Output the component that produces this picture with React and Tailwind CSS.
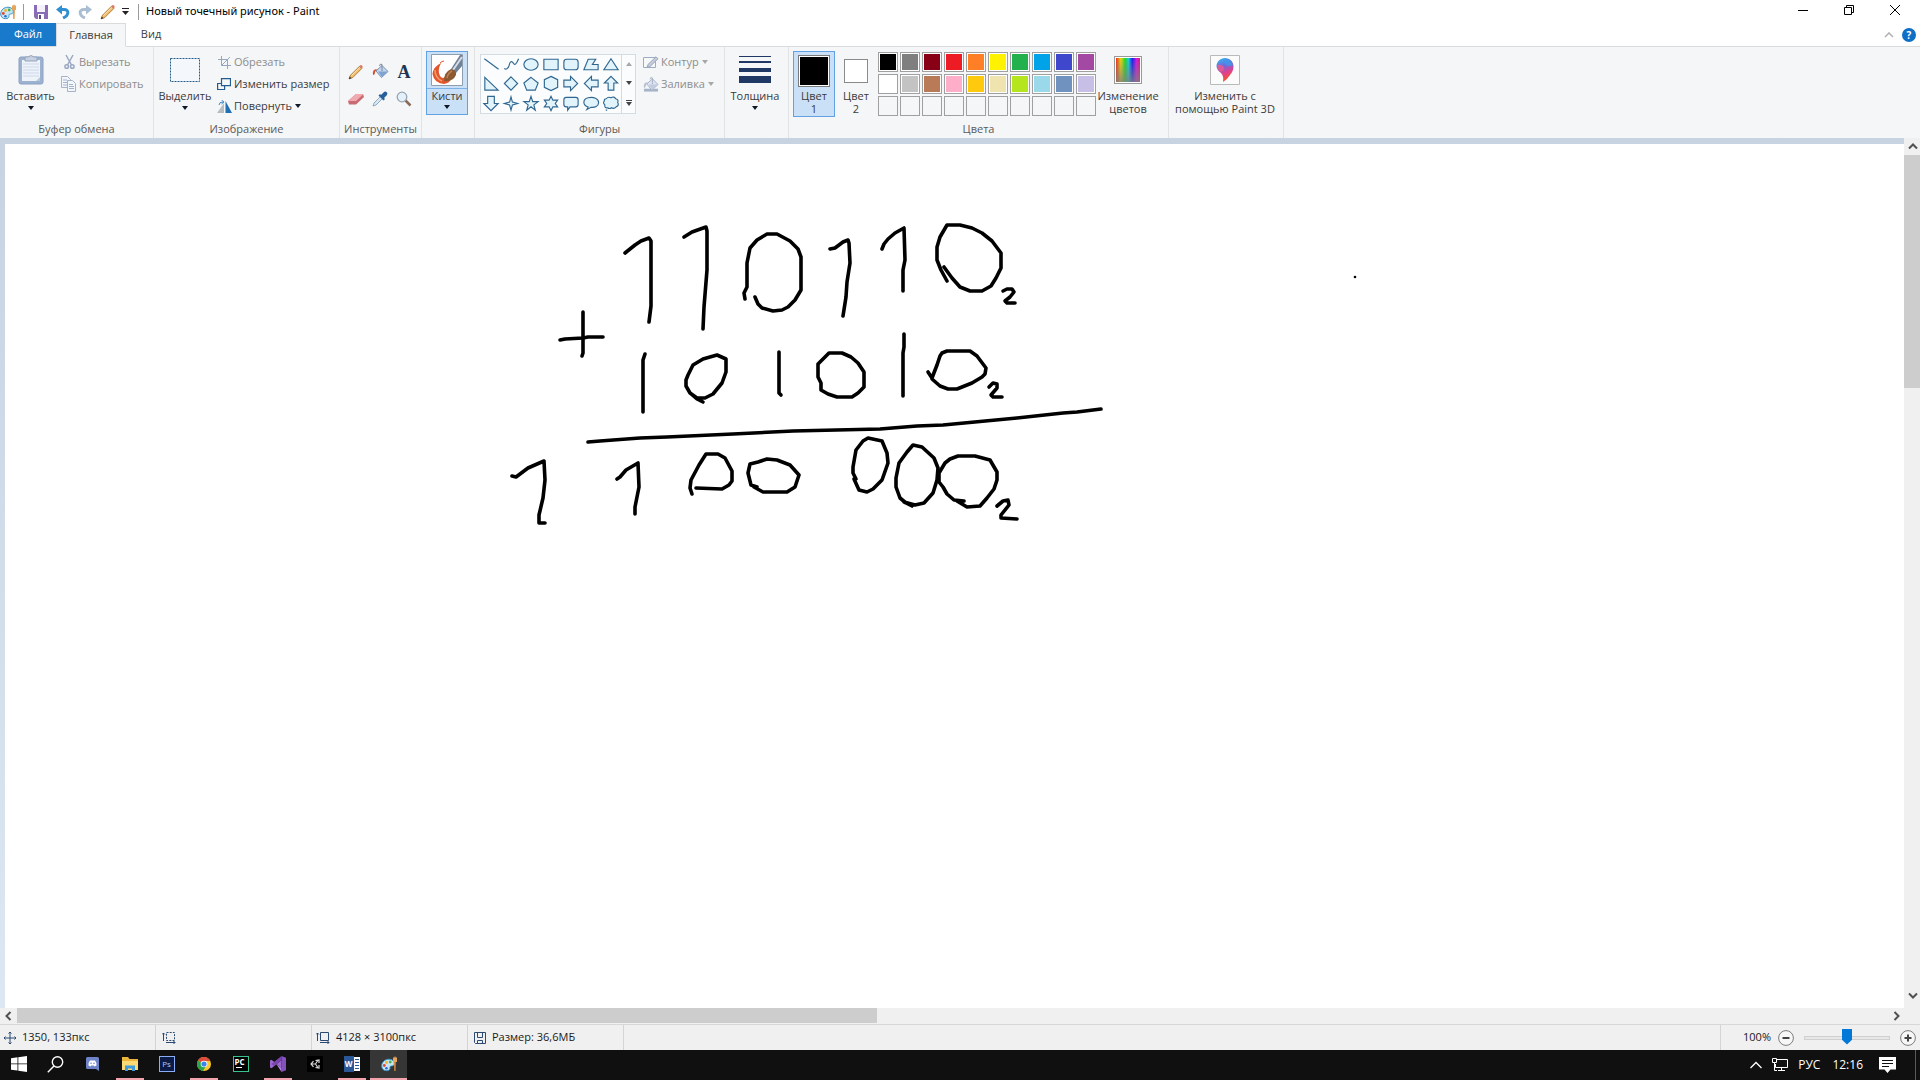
import React, { useState } from "react";

const paletteColors = [
  ["black", "bg-[#000000]"],
  ["gray", "bg-[#7f7f7f]"],
  ["dark red", "bg-[#880015]"],
  ["red", "bg-[#ed1c24]"],
  ["orange", "bg-[#ff7f27]"],
  ["yellow", "bg-[#fff200]"],
  ["green", "bg-[#22b14c]"],
  ["turquoise", "bg-[#00a2e8]"],
  ["indigo", "bg-[#3f48cc]"],
  ["purple", "bg-[#a349a4]"],
  ["white", "bg-[#ffffff]"],
  ["light gray", "bg-[#c3c3c3]"],
  ["brown", "bg-[#b97a57]"],
  ["rose", "bg-[#ffaec9]"],
  ["gold", "bg-[#ffc90e]"],
  ["light yellow", "bg-[#efe4b0]"],
  ["lime", "bg-[#b5e61d]"],
  ["light turquoise", "bg-[#99d9ea]"],
  ["blue gray", "bg-[#7092be]"],
  ["lavender", "bg-[#c8bfe7]"],
];

// Outlines of the shape gallery, each inside a 20x20 cell
const shapes = [
  ["Line", "M3 4L18 15"],
  ["Curve", "M3 14C5 16 7 14 8 11C9 7 10 6 12 8C14 12 16 9 18 4"],
  ["Oval", "M2.5 10a7.5 6 0 1 0 15 0a7.5 6 0 1 0-15 0z"],
  ["Rectangle", "M2.5 4.5h15v11h-15z"],
  ["Rounded rectangle", "M5.5 4.5h9q3 0 3 3v5q0 3-3 3h-9q-3 0-3-3v-5q0-3 3-3z"],
  ["Polygon", "M2.5 15.5L7 4.5h8L11.5 10H17.5v5.5z"],
  ["Triangle", "M10 4L17.5 15.5h-15z"],
  ["Right triangle", "M3.5 3.5L17.5 17h-14z"],
  ["Diamond", "M10 3L17 10L10 17L3 10z"],
  ["Pentagon", "M10 3.5L17.5 9.5L14.5 17h-9L2.5 9.5z"],
  ["Hexagon", "M10 2.5L17 6v8L10 17.5L3 14V6z"],
  ["Right arrow", "M2.5 6.5h7v-4L17 10L9.5 17.5v-4h-7z"],
  ["Left arrow", "M17.5 6.5h-7v-4L3 10l7.5 7.5v-4h7z"],
  ["Up arrow", "M10 2.5L17 9.5h-4v7.5h-6V9.5H3z"],
  ["Down arrow", "M6.5 2.5h7v7.5h4L10 17.5L2.5 10h4z"],
  ["Four-point star", "M10 3L11.5 8.5L17 10L11.5 11.5L10 17L8.5 11.5L3 10L8.5 8.5z"],
  ["Five-point star", "M10 2.5L11.8 8h5.7l-4.5 3.5L14.5 17L10 13.5L5.5 17L7 11.5L2.5 8h5.7z"],
  ["Six-point star", "M10 2.5L12 6.5h5L14.5 10L17 13.5h-5L10 17.5L8 13.5H3L5.5 10L3 6.5h5z"],
  ["Rounded callout", "M5 3.5h10q2.5 0 2.5 2.5v5q0 2.5-2.5 2.5H9L6.5 17v-3.5H5q-2.5 0-2.5-2.5V6q0-2.5 2.5-2.5z"],
  ["Oval callout", "M5.5 16.5L7 13.7C1 12 1 5.5 7 4C13 2.5 18 5 18 9C18 13 14 14.5 10 14z"],
  ["Cloud callout", "M5 5Q7 2.5 10 4Q13 2 15 5Q18.5 6 17 9Q19 12 15.5 13.5Q13 16 10.5 14.5Q8.5 16 6.5 14.5Q3 15 3.5 11.5Q1 9 3 7.5Q2.5 5 5 5zM4.5 17h1.5"],
];

// Brush strokes in window coordinates
const strokes = [
  "625 253 635 245 641 241 649 238 651 241 651 306 649 322",
  "684 237 692 232 706 227 707 231 707 270 704 307 703 329",
  "745 299 744 293 747 287 747 263 750 248 757 240 767 234 777 234 790 241 798 249 801 257 801 290 795 300 788 307 782 310 773 311 762 308 758 304 755 297",
  "830 249 835 248 843 242 848 240 849 243 850 263 847 282 846 297 843 316",
  "882 249 884 244 888 239 895 233 904 228 905 260 903 270 903 291",
  "944 267 952 278 960 287 970 291 982 291 991 286 996 278 1001 268 1001 253 992 241 982 233 972 228 960 225 947 225 940 237 937 247 937 260 941 270 947 281",
  "1003 291 1007 289 1012 289 1014 292 1010 297 1005 301 1007 303 1015 303",
  "560 340 565 339 583 338 588 337 603 337",
  "583 312 583 353 582 356",
  "645 354 643 360 643 412",
  "703 402 697 399 690 393 686 386 686 380 688 375 693 365 703 359 717 355 726 359 726 372 722 383 713 394 705 398 697 398 690 393",
  "779 352 779 393 781 395",
  "842 353 829 353 818 364 818 377 821 383 821 390 828 394 837 397 852 397 858 393 864 387 864 372 858 363 851 357 842 353",
  "904 334 904 347 903 353 903 396",
  "928 372 932 378 937 365 940 356 942 353 947 351 970 351 977 356 986 368 985 374 982 377 972 383 957 389 948 389 940 386 932 379",
  "989 387 993 383 997 384 997 388 991 395 993 397 1002 397",
  "588 442 600 441 640 438 667 437 733 434 793 431 880 429 917 426 943 425 1017 418 1063 413 1077 412 1101 409",
  "512 476 516 477 528 468 544 461 545 480 543 498 539 515 539 523 545 523",
  "617 479 620 477 626 470 638 463 639 487 635 507 635 514",
  "692 494 690 488 691 480 699 465 706 454 718 454 725 458 732 471 732 481 729 485 722 489 696 488",
  "757 487 751 485 748 473 750 464 758 462 767 459 777 460 790 465 799 475 795 487 787 492 763 492 754 487",
  "856 479 853 473 853 467 856 450 863 441 868 438 882 441 887 453 888 463 882 480 873 489 867 492 859 490 854 479",
  "912 506 906 503 900 498 896 487 896 478 899 463 907 452 913 445 922 447 934 458 938 468 937 480 933 493 924 503 915 505 904 502",
  "964 501 954 500 947 494 943 487 939 482 939 473 945 463 950 459 958 456 975 456 990 460 997 472 997 480 994 489 987 498 980 506 967 507 957 501",
  "997 506 1003 501 1008 500 1009 505 1001 515 1001 518 1017 519",
];

const Caret = ({ className = "text-gray-900" }) => (
  <svg width="6" height="4" viewBox="0 0 6 4" className={`shrink-0 ${className}`}>
    <path d="M0 0h6L3 4z" fill="currentColor" />
  </svg>
);

const Divider = () => <div className="h-4 w-px bg-[#9a9a9a]" />;

const Group = ({ label, className, children }) => (
  <section
    className={`flex shrink-0 flex-col border-r border-[#e2e3e4] pt-1 ${className}`}
  >
    <div className="flex h-[68px]">{children}</div>
    <h2 className="h-[19px] text-center leading-[19px] text-[#5a5a5a]">
      {label}
    </h2>
  </section>
);

const BigButton = ({ icon, lines, caret, className = "" }) => (
  <button
    className={`flex h-[66px] shrink-0 flex-col items-center ${className}`}
  >
    <span className="flex h-[38px] items-center justify-center">{icon}</span>
    {lines.map((line) => (
      <span key={line} className="leading-[13px] whitespace-nowrap">
        {line}
      </span>
    ))}
    {caret && (
      <span className="flex h-3 items-center">
        <Caret />
      </span>
    )}
  </button>
);

const SmallButton = ({ icon, label, caret, disabled }) => (
  <button
    disabled={disabled}
    className={`flex h-[22px] items-center gap-0.5 whitespace-nowrap ${
      disabled ? "text-[#8d8d8d]" : ""
    }`}
  >
    <span className="flex w-4 justify-center">{icon}</span>
    {label}
    {caret && (
      <Caret className={disabled ? "ml-px text-[#a8a8a8]" : "ml-px text-gray-900"} />
    )}
  </button>
);

const PaletteIcon = () => (
  <svg width="16" height="16" viewBox="0 0 16 16">
    <path d="M.7 10C.7 6 4 3.200 8 3.200c3.500 0 5.300 2 5.300 4.300 0 2-1.500 2.500-3 2.500s-1.300 1.300-1.300 2.300c0 1.500-1.500 2.400-3.300 2.400C2.700 14.700.7 13 .7 10z" fill="#c4e6f6" stroke="#3c92c4" />
    <circle cx="3.300" cy="9.500" r="1.400" fill="#e8452c" />
    <circle cx="5.500" cy="6.500" r="1.400" fill="#f4b32a" />
    <circle cx="9.200" cy="6" r="1.400" fill="#4caf50" />
    <circle cx="5.500" cy="12.300" r="1.300" fill="#2c6ed5" />
    <path d="M13 5.500h1.800l-.3 9.500h-1.200z" fill="#d98f3f" />
    <path d="M12 1l1 1 1-2 1 2 1-1v5h-4z" fill="#e5a55a" />
  </svg>
);

const SaveIcon = () => (
  <svg width="14" height="14" viewBox="0 0 14 14">
    <path d="M0 0h14v14H2L0 12z" fill="#8a6bb5" />
    <path d="M3 0h8v7H3z" fill="#f4f1fa" />
    <path d="M4 9h6v5H4z" fill="#fff" />
    <path d="M5 10h2v4H5z" fill="#5b4a86" />
  </svg>
);

const UndoIcon = ({ color, flip }) => (
  <svg width="14" height="14" viewBox="0 0 14 14" className={flip ? "-scale-x-100" : ""}>
    <path d="M4 4.500h4c5.500 0 5 6-1 8.500" fill="none" stroke={color} strokeWidth="3" />
    <path d="M0 4.500L6 0v9.500z" fill={color} />
  </svg>
);

const PencilIcon = () => (
  <svg width="16" height="16" viewBox="0 0 16 16">
    <path d="M1 15L2.500 11.200L11.500 2.200L13.800 4.500L4.800 13.500z" fill="#f3bf6c" stroke="#a06a2c" strokeWidth=".8" />
    <path d="M3.500 11.500L12 3.300" stroke="#fbe3b5" />
    <path d="M11 2.500l1.300-1.300q.8-.6 1.700.3t.6 1.900l-1.300 1.300z" fill="#d97b6a" />
    <path d="M1 15l.7-2.400 1.800 1.700z" fill="#333" />
  </svg>
);

const BucketIcon = ({ muted }) => (
  <svg width="17" height="17" viewBox="0 0 17 17">
    {muted && <path d="M1 13h15v3H1z" fill="#a7b3c9" />}
    <path d="M4 8L10 2.500L16 8.500L9.500 14.500z" fill={muted ? "#dfe5f0" : "#c3d7ee"} stroke={muted ? "#a3b0c6" : "#7390b5"} />
    <path d="M6 8.500h9.500L10 14z" fill={muted ? "#c2ccdd" : "#7fa3d1"} />
    <path d="M10 8V1.500Q8 0 7.500 3" fill="none" stroke={muted ? "#a3b0c6" : "#7c8797"} />
    <path d="M5 6Q0 6 1 12Q3 12 3 9z" fill={muted ? "#b3bed1" : "#d9492c"} />
  </svg>
);

const EraserIcon = () => (
  <svg width="16" height="14" viewBox="0 0 16 14">
    <path d="M0 9L8 2h7l1 3-8 7.500H1z" fill="#c96b72" />
    <path d="M0 9L8 2h7.500L8 9z" fill="#f0aab0" />
  </svg>
);

const PickerIcon = () => (
  <svg width="16" height="16" viewBox="0 0 16 16">
    <path d="M1 15l1-3 6.500-6.500 2 2L4 14z" fill="#d6e8f7" stroke="#7b97b3" strokeWidth=".8" />
    <path d="M6.500 4.500l5 5 1.500-1.500-1-1 3-3q1-2-.5-3t-3 .5L9 4l-1-1z" fill="#285f9b" />
  </svg>
);

const MagnifierIcon = () => (
  <svg width="16" height="16" viewBox="0 0 16 16">
    <path d="M9.500 9.500L14.500 14.500" stroke="#8b6b57" strokeWidth="2.500" />
    <circle cx="6" cy="6" r="4.800" fill="#e4f1fa" stroke="#97a5b3" strokeWidth="1.300" />
  </svg>
);

const PasteIcon = () => (
  <svg width="26" height="32" viewBox="0 0 26 32">
    <rect x="1" y="3" width="24" height="27" rx="2" fill="#9db1d0" stroke="#8ba0c2" />
    <path d="M4 6h18v21H4z" fill="#eef3fa" />
    <path d="M5 10h16M5 13h16M5 16h16M5 19h16M5 22h16" stroke="#cbd7e8" />
    <path d="M18 27l4-4v4z" fill="#b9c8de" />
    <path d="M7 3h3q3-3 6 0h3v4H7z" fill="#c8d1df" stroke="#93a4bf" />
  </svg>
);

const CutIcon = () => (
  <svg width="11" height="16" viewBox="0 0 11 16" fill="none" stroke="#9aa9c3" strokeWidth="1.500">
    <path d="M2 1L7.500 11M9 1L3.500 11" />
    <circle cx="2.700" cy="12.500" r="1.800" />
    <circle cx="8.300" cy="12.500" r="1.800" />
  </svg>
);

const CopyIcon = () => (
  <svg width="16" height="16" viewBox="0 0 16 16" fill="#f3f6fb" stroke="#a4b2cb">
    <path d="M.5.500h6l3 3v8h-9z" />
    <path d="M2 4h4M2 6.500h4M2 9h4" />
    <path d="M6.500 4.500h5l3 3v8h-8z" />
    <path d="M8 8.500h4M8 10.500h5M8 12.500h5" />
  </svg>
);

const SelectIcon = () => (
  <svg width="30" height="24" viewBox="0 0 30 24">
    <rect x=".5" y=".5" width="29" height="23" fill="#f4f8fc" stroke="#245b8e" strokeDasharray="2 1" />
  </svg>
);

const CropIcon = () => (
  <svg width="13" height="13" viewBox="0 0 13 13" fill="none" stroke="#97a6bf">
    <path d="M3.500 0v9.500H13M0 3.500h9.500V13M3.500 9.500L12 1" />
  </svg>
);

const ResizeIcon = () => (
  <svg width="14" height="12" viewBox="0 0 14 12" fill="#f5f6f7" stroke="#245b8e" strokeWidth="1.200">
    <path d="M.6 5.500h7v6h-7z" />
    <path d="M4.500.6h9v7h-9z" />
  </svg>
);

const RotateIcon = () => (
  <svg width="15" height="13" viewBox="0 0 15 13">
    <path d="M7 3v10H0z" fill="#b9bdc2" />
    <path d="M8.500 1v12H15z" fill="#1f6fb5" />
    <path d="M2 5Q2 2 6 2M4.500 0L7 2L4.500 4" fill="none" stroke="#3d8bc9" />
  </svg>
);

const BrushIcon = () => (
  <svg width="32" height="32" viewBox="0 0 32 32">
    <path d="M.5.500h31v31H.5z" fill="#fff" stroke="#8f9db0" />
    <path d="M10 9Q2 13 1.500 20Q3 29 13 30Q19 29 20 25L15 22Q12 26 9 22Q6 17 10 9z" fill="#e2562c" />
    <path d="M4 16Q4 24 11 27" fill="none" stroke="#f59a6f" strokeWidth="1.500" />
    <path d="M9 9q2-2 4-2" fill="none" stroke="#e2562c" />
    <path d="M20 15L29 1h2v11L25 19z" fill="#6f8298" />
    <path d="M22 16L31 3" stroke="#d4dde6" strokeWidth="2" />
    <path d="M13 27Q13 18 20 15Q26 16 25 21Q22 28 13 27z" fill="#8c5a32" />
    <path d="M16 24Q17 19 21 17" fill="none" stroke="#bb8550" strokeWidth="1.500" />
  </svg>
);

const OutlineIcon = () => (
  <svg width="16" height="13" viewBox="0 0 16 13">
    <path d="M.5 1.500h12v10H.5z" fill="#f7f8fa" stroke="#9eacc2" />
    <path d="M4 11.500l1-3L13 .8l2 2L7 10.500z" fill="#c5cddb" stroke="#98a5bd" />
  </svg>
);

const ThicknessIcon = () => (
  <svg width="32" height="28" viewBox="0 0 32 28" fill="#1f3864">
    <path d="M0 0h32v1H0zM0 5h32v2H0zM0 12h32v4H0zM0 20h32v7H0z" />
  </svg>
);

const SpectrumIcon = () => (
  <span className="block size-7 border border-[#9a9a9a] bg-white p-px">
    <span className="block size-full bg-[linear-gradient(to_right,#f02a1a,#e8d816_20%,#22d822_38%,#12cfe0_52%,#1a1af0_68%,#d018e0_85%,#e01860)]">
      <span className="block size-full bg-linear-to-b from-transparent to-[#808080]/80" />
    </span>
  </span>
);

const Paint3dIcon = () => (
  <svg width="30" height="30" viewBox="0 0 30 30">
    <defs>
      <linearGradient id="drop" x1="0" y1="0" x2=".3" y2="1">
        <stop offset="0" stopColor="#2cc3f0" />
        <stop offset=".4" stopColor="#6a6be0" />
        <stop offset=".7" stopColor="#e0408f" />
        <stop offset="1" stopColor="#f0552c" />
      </linearGradient>
    </defs>
    <path d="M.5.500h29v29H.5z" fill="#fbfbfb" stroke="#bababa" />
    <path d="M15 3C10 3 6.500 7 6.500 11.500Q7 15 11 18Q14 21 13 27Q17 25 20 20Q23.500 16 23.500 11.500C23.500 7 20 3 15 3z" fill="url(#drop)" />
    <path d="M7 10Q14 9 14 14Q13 18 9 16Q6.500 13 7 10z" fill="#f05a8c" opacity=".8" />
    <path d="M13 4Q21 4 23 10Q18 13 15 9Q14 6 13 4z" fill="#3a9de8" opacity=".7" />
  </svg>
);

const TitleBar = () => (
  <header className="flex h-[23px] shrink-0 items-start bg-white">
    <div className="flex h-[23px] items-center gap-[7px]">
      <PaletteIcon />
      <Divider />
      <div className="flex items-center gap-2 pl-[3px]">
        <button aria-label="Сохранить"><SaveIcon /></button>
        <button aria-label="Отменить"><UndoIcon color="#2f8fd0" /></button>
        <button aria-label="Вернуть"><UndoIcon color="#a9bdd3" flip /></button>
        <div className="flex items-center gap-1.5 pr-0.5">
          <button aria-label="Карандаш"><PencilIcon /></button>
          <button aria-label="Настройка панели">
            <svg width="7" height="7" viewBox="0 0 7 7">
              <path d="M0 0h7v1H0zM0 3h7L3.500 7z" fill="#222" />
            </svg>
          </button>
        </div>
      </div>
      <Divider />
      <h1 className="font-['Noto_Sans',sans-serif] text-[11px] text-black">
        Новый точечный рисунок - Paint
      </h1>
    </div>
    <div className="mr-0.5 ml-auto flex h-5">
      <button aria-label="Свернуть" className="flex w-[46px] items-center justify-center">
        <span className="h-px w-2.5 bg-black" />
      </button>
      <button aria-label="Восстановить" className="flex w-[46px] items-center justify-center">
        <svg width="10" height="10" viewBox="0 0 10 10" fill="none" stroke="#000">
          <path d="M.5 2.500h7v7h-7zM2.500 2.500v-2h7v7h-2" />
        </svg>
      </button>
      <button aria-label="Закрыть" className="flex w-[46px] items-center justify-center">
        <svg width="10" height="10" viewBox="0 0 10 10" stroke="#000">
          <path d="M0 0l10 10M10 0L0 10" />
        </svg>
      </button>
    </div>
  </header>
);

const Tabs = () => (
  <nav className="flex h-6 shrink-0 border-b border-[#dadbdc] bg-white">
    <button className="w-14 bg-[#1979ca] text-white">Файл</button>
    <button className="-mb-px w-[70px] border-x border-t border-b border-[#dadbdc] border-b-[#f5f6f7] bg-[#f5f6f7]">
      Главная
    </button>
    <button className="w-[50px]">Вид</button>
    <div className="ml-auto flex items-center gap-2 pr-1">
      <button aria-label="Свернуть ленту">
        <svg width="10" height="6" viewBox="0 0 10 6" fill="none" stroke="#b3b3b3" strokeWidth="1.600">
          <path d="M1 5L5 1L9 5" />
        </svg>
      </button>
      <button
        aria-label="Справка"
        className="size-3.5 rounded-full bg-[#0f6fc6] text-[10px] leading-[14px] font-bold text-white"
      >
        ?
      </button>
    </div>
  </nav>
);

const ColorButton = ({ number, selected, onClick }) => (
  <button
    onClick={onClick}
    className={`flex h-[66px] w-[42px] flex-col items-center border ${
      selected ? "border-[#62a2e4] bg-[#c9e0f7]" : "border-transparent"
    }`}
  >
    <span className="flex h-[37px] items-center">
      {number === 1 ? (
        <span className="size-8 border border-[#7a7a7a] bg-white p-px">
          <span className="block size-full bg-black" />
        </span>
      ) : (
        <span className="size-6 border border-[#8a8a8a] bg-white" />
      )}
    </span>
    <span className="leading-[13px]">Цвет</span>
    <span className="leading-[13px]">{number}</span>
  </button>
);

const Ribbon = () => {
  const [activeColor, setActiveColor] = useState(1);

  return (
    <div className="flex h-[91px] shrink-0 bg-[#f5f6f7] text-[#3b3b3b]">
      <Group label="Буфер обмена" className="w-[154px]">
        <BigButton className="w-[61px]" icon={<PasteIcon />} lines={["Вставить"]} caret />
        <div>
          <SmallButton icon={<CutIcon />} label="Вырезать" disabled />
          <SmallButton icon={<CopyIcon />} label="Копировать" disabled />
        </div>
      </Group>

      <Group label="Изображение" className="w-[186px]">
        <BigButton className="w-[62px]" icon={<SelectIcon />} lines={["Выделить"]} caret />
        <div>
          <SmallButton icon={<CropIcon />} label="Обрезать" disabled />
          <SmallButton icon={<ResizeIcon />} label="Изменить размер" />
          <SmallButton icon={<RotateIcon />} label="Повернуть" caret />
        </div>
      </Group>

      <Group label="Инструменты" className="w-[82px]">
        <div className="ml-1 grid grid-cols-[24px_24px_24px] grid-rows-[27px_27px] place-items-center content-center">
          <button aria-label="Карандаш"><PencilIcon /></button>
          <button aria-label="Заливка"><BucketIcon /></button>
          <button aria-label="Текст" className="font-['Liberation_Serif',serif] text-[18px] leading-5 font-bold text-[#1f3550]">
            A
          </button>
          <button aria-label="Ластик"><EraserIcon /></button>
          <button aria-label="Палитра"><PickerIcon /></button>
          <button aria-label="Масштаб"><MagnifierIcon /></button>
        </div>
      </Group>

      <Group label="" className="w-[53px]">
        <button className="ml-1 flex h-16 w-[42px] flex-col items-center border border-[#62a2e4] bg-[#c9e0f7]">
          <span className="flex h-[37px] w-full items-center justify-center border-b border-[#7db2e8]">
            <BrushIcon />
          </span>
          <span className="leading-[14px]">Кисти</span>
          <span className="flex h-2 items-center"><Caret /></span>
        </button>
      </Group>

      <Group label="Фигуры" className="w-[250px]">
        <div className="mt-[3px] ml-[5px] flex h-[60px] shrink-0 border border-[#d5dbe2] bg-[#fafcfd]">
          <div className="grid grid-cols-7">
            {shapes.map(([name, path]) => (
              <button key={name} aria-label={name}>
                <svg width="20" height="19" viewBox="0 0 20 20" fill="none" stroke="#2f6690" strokeWidth="1.200">
                  <path d={path} fill={name === "Line" || name === "Curve" ? "none" : "#e2f4fb"} />
                </svg>
              </button>
            ))}
          </div>
          <div className="flex w-[14px] flex-col items-center justify-around border-l border-[#d5dbe2]">
            <button aria-label="Вверх">
              <Caret className="rotate-180 text-[#a8a8a8]" />
            </button>
            <button aria-label="Вниз"><Caret className="text-[#444]" /></button>
            <button aria-label="Все фигуры" className="border-t border-[#444] pt-px">
              <Caret className="text-[#444]" />
            </button>
          </div>
        </div>
        <div className="ml-[7px]">
          <SmallButton icon={<OutlineIcon />} label="Контур" caret disabled />
          <SmallButton icon={<BucketIcon muted />} label="Заливка" caret disabled />
        </div>
      </Group>

      <Group label="" className="w-16">
        <BigButton className="w-[60px]" icon={<ThicknessIcon />} lines={["Толщина"]} caret />
      </Group>

      <Group label="Цвета" className="w-[380px]">
        <div className="flex pl-1">
          <ColorButton number={1} selected={activeColor === 1} onClick={() => setActiveColor(1)} />
          <ColorButton number={2} selected={activeColor === 2} onClick={() => setActiveColor(2)} />
        </div>
        <div className="mt-px ml-px grid grid-cols-10 content-start gap-0.5">
          {paletteColors.map(([name, color]) => (
            <button key={name} aria-label={name} className="size-5 border border-[#a0a0a0] bg-white p-px">
              <span className={`block size-full ${color}`} />
            </button>
          ))}
          {Array.from({ length: 10 }, (_, i) => (
            <button key={i} aria-label="custom color" className="size-5 border border-[#a0a0a0]" />
          ))}
        </div>
        <BigButton className="w-16" icon={<SpectrumIcon />} lines={["Изменение", "цветов"]} />
      </Group>

      <Group label="" className="w-[115px]">
        <BigButton className="w-28" icon={<Paint3dIcon />} lines={["Изменить с", "помощью Paint 3D"]} />
      </Group>
    </div>
  );
};

const arrowPaths = {
  up: "M1 6.500L5 2.500L9 6.500",
  down: "M1 2.500L5 6.500L9 2.500",
  left: "M6.500 1L2.500 5L6.500 9",
  right: "M3.500 1L7.500 5L3.500 9",
};

const ScrollButton = ({ direction }) => (
  <button aria-label={`Scroll ${direction}`} className="flex h-4 w-[17px] shrink-0 items-center justify-center">
    <svg width="10" height="10" viewBox="0 0 10 10" fill="none" stroke="#505050" strokeWidth="2">
      <path d={arrowPaths[direction]} />
    </svg>
  </button>
);

const Workspace = () => (
  <main className="flex min-h-0 flex-1 flex-col">
    <div className="flex min-h-0 flex-1">
      <div className="min-w-0 flex-1 overflow-hidden bg-linear-to-b from-[#c8d3e2] to-[#dce7f3] pt-1.5 pl-[5px]">
        <div className="h-full bg-white">
          <svg width="1440" height="500" viewBox="5 144 1440 500" role="img" aria-label="110110 + 101010">
            <g fill="none" stroke="#000" strokeWidth="3.600" strokeLinecap="round" strokeLinejoin="round">
              {strokes.map((points) => (
                <polyline key={points} points={points} />
              ))}
            </g>
            <circle cx="1355" cy="277" r="1.300" />
          </svg>
        </div>
      </div>
      <div className="flex w-4 flex-col bg-[#f0f0f0] pt-px pb-1">
        <ScrollButton direction="up" />
        <div className="flex-1">
          <div className="h-[28%] bg-[#cdcdcd]" />
        </div>
        <ScrollButton direction="down" />
      </div>
    </div>
    <div className="flex h-4 shrink-0 items-start bg-[#f0f0f0] pr-4">
      <ScrollButton direction="left" />
      <div className="h-[15px] flex-1">
        <div className="h-full w-[46%] bg-[#cdcdcd]" />
      </div>
      <ScrollButton direction="right" />
    </div>
  </main>
);

const StatusCell = ({ icon, children }) => (
  <div className="flex w-[156px] items-center gap-1.5 border-r border-[#d4d4d4] pl-1">
    {icon}
    {children}
  </div>
);

const SizeIcon = ({ dashed }) => (
  <svg width="14" height="12" viewBox="0 0 14 12" fill="none" stroke="#2b4a73">
    <path d="M4.500.500h8v8h-8z" strokeDasharray={dashed ? "2 1.200" : undefined} />
    <path d="M1.500 9V1M0 2.500L1.500 1L3 2.500M4 10.500h9M11.500 9L13 10.500L11.500 12" />
  </svg>
);

const ZoomButton = ({ label, path }) => (
  <button aria-label={label}>
    <svg width="16" height="16" viewBox="0 0 16 16" fill="#f7f7f7" stroke="#7c7c7c">
      <circle cx="8" cy="8" r="7.400" />
      <path d={path} stroke="#444" strokeWidth="2" />
    </svg>
  </button>
);

const StatusBar = () => {
  const [zoom, setZoom] = useState(50);

  return (
    <footer className="flex h-[26px] shrink-0 border-t border-[#d7d7d7] bg-[#f0f0f0] text-[11px] text-[#1a1a1a]">
      <StatusCell
        icon={
          <svg width="12" height="12" viewBox="0 0 12 12" fill="none" stroke="#2b4a73">
            <path d="M6 0v12M0 6h12M4.500 1.500L6 0l1.500 1.500M4.500 10.500L6 12l1.500-1.500M1.500 4.500L0 6l1.500 1.500M10.500 4.500L12 6l-1.500 1.500" />
          </svg>
        }
      >
        1350, 133пкс
      </StatusCell>
      <div className="flex w-[156px] items-center border-r border-[#d4d4d4] pl-1.5">
        <SizeIcon dashed />
      </div>
      <StatusCell icon={<SizeIcon />}>4128 × 3100пкс</StatusCell>
      <StatusCell
        icon={
          <svg width="14" height="12" viewBox="-3 0 14 12" fill="none" stroke="#2b4a73">
            <path d="M-.5.500h11v11h-10l-1-1zM2.500.500v5h5v-5M2.500 11.500v-3h5v3" />
          </svg>
        }
      >
        Размер: 36,6МБ
      </StatusCell>
      <div className="ml-auto flex items-center border-l border-[#d4d4d4] pr-1">
        <label htmlFor="zoom" className="w-[57px] pr-[7px] text-right">
          100%
        </label>
        <ZoomButton label="Уменьшить" path="M4.500 8h7" />
        <input
          id="zoom"
          type="range"
          value={zoom}
          onChange={(e) => setZoom(Number(e.target.value))}
          className="mx-2.5 h-4 w-[86px] appearance-none bg-transparent [&::-webkit-slider-runnable-track]:h-1 [&::-webkit-slider-runnable-track]:border [&::-webkit-slider-runnable-track]:border-[#d0d0d0] [&::-webkit-slider-runnable-track]:bg-[#e7e7e7] [&::-webkit-slider-thumb]:-mt-[8px] [&::-webkit-slider-thumb]:h-4 [&::-webkit-slider-thumb]:w-2.5 [&::-webkit-slider-thumb]:appearance-none [&::-webkit-slider-thumb]:bg-[#0078d7] [&::-webkit-slider-thumb]:[clip-path:polygon(0_0,100%_0,100%_70%,50%_100%,0_70%)]"
        />
        <ZoomButton label="Увеличить" path="M4.500 8h7M8 4.500v7" />
      </div>
    </footer>
  );
};

const TaskButton = ({ label, running, active, children }) => (
  <button
    aria-label={label}
    className={`flex h-full w-[37px] flex-col items-center ${
      active ? "bg-[#363636]" : ""
    }`}
  >
    <span className="flex flex-1 items-center">{children}</span>
    {running && (
      <span className={`h-0.5 bg-[#f2a3ad] ${active ? "w-full" : "w-7"}`} />
    )}
    {!running && <span className="h-0.5" />}
  </button>
);

const Taskbar = () => (
  <nav className="flex h-[30px] shrink-0 bg-[#101010] text-white">
    <TaskButton label="Пуск">
      <svg width="16" height="16" viewBox="0 0 16 16" fill="#fff">
        <path d="M0 2.200L6.500 1.300v6.200H0zM7.300 1.200L16 0v7.500H7.300zM0 8.300h6.500v6.200L0 13.700zM7.300 8.300H16V16l-8.700-1.300z" />
      </svg>
    </TaskButton>
    <TaskButton label="Поиск">
      <svg width="17" height="17" viewBox="0 0 17 17" fill="none" stroke="#fff" strokeWidth="1.400">
        <circle cx="10.500" cy="6" r="5.200" />
        <path d="M7 10L.8 16.200" />
      </svg>
    </TaskButton>
    <TaskButton label="Discord">
      <svg width="13" height="14" viewBox="0 0 13 14">
        <path d="M1.500 0h10q1.500 0 1.500 1.500V14l-3-2H1.500Q0 12 0 10.500v-9Q0 0 1.500 0z" fill="#6f83c9" />
        <path d="M2.500 8.500Q2.500 5 4 3.500h5q1.500 1.500 1.500 5l-2 1-.8-1H5.300l-.8 1z" fill="#fff" />
        <circle cx="5" cy="6.300" r=".8" fill="#6f83c9" />
        <circle cx="8" cy="6.300" r=".8" fill="#6f83c9" />
      </svg>
    </TaskButton>
    <TaskButton label="Проводник" running>
      <svg width="16" height="14" viewBox="0 0 16 14">
        <path d="M0 0h6l1.500 2H16v11H0z" fill="#e9b53a" />
        <path d="M0 4h16v9H0z" fill="#fbd974" />
        <path d="M3 14V8.500h10V14h-3v-2.500H6V14z" fill="#3f9bdc" />
      </svg>
    </TaskButton>
    <TaskButton label="Photoshop">
      <span className="flex size-4 items-center justify-center border border-[#8aaef5] bg-[#0c1b45] text-[8px] leading-none text-[#a9c6ff]">
        Ps
      </span>
    </TaskButton>
    <TaskButton label="Chrome" running>
      <svg width="14" height="14" viewBox="0 0 14 14">
        <circle cx="7" cy="7" r="7" fill="#f9c82c" />
        <path d="M7 7L.9 3.500A7 7 0 0 1 13.100 3.700L13 4H7z" fill="#dd4b3c" />
        <path d="M.9 3.500A7 7 0 0 0 6 13.900L9 9z" fill="#2ba24c" />
        <circle cx="7" cy="7" r="3.300" fill="#fff" />
        <circle cx="7" cy="7" r="2.600" fill="#3f82ee" />
      </svg>
    </TaskButton>
    <TaskButton label="PyCharm">
      <span className="flex size-4 flex-col items-start border border-[#37c48e] bg-black px-px text-[8px] leading-[9px] font-bold">
        PC
        <span className="mt-px ml-px h-px w-1.5 bg-white" />
      </span>
    </TaskButton>
    <TaskButton label="Visual Studio" running>
      <svg width="16" height="16" viewBox="0 0 16 16">
        <path d="M0 4.500l1.500-.8L11.500 12V4L1.500 12.300 0 11.500z" fill="#9b67cf" />
        <path d="M11.500 0L16 1.800v12.400L11.500 16z" fill="#8552bd" />
        <path d="M11.500 0v4L4 10l-2.500-2z" fill="#7a45b0" />
        <path d="M11.500 16v-4L6 7.500" fill="#b084e0" />
      </svg>
    </TaskButton>
    <TaskButton label="Unity">
      <span className="flex size-4 items-center justify-center bg-black">
        <svg width="10" height="10" viewBox="0 0 10 10" fill="none" stroke="#d8d8d8" strokeWidth="1.200">
          <path d="M3.500 2.200L1 5L3.500 7.800M5.500 1.500L9 1L9 4M5.500 8.500L9 9L9 6M1.500 5H5.500M5.500 5L7.800 1.500M5.500 5L7.800 8.500" />
        </svg>
      </span>
    </TaskButton>
    <TaskButton label="Word" running>
      <span className="flex h-[14px] w-4 items-center bg-white">
        <span className="flex h-4 w-2.5 shrink-0 items-center justify-center bg-[#2b5797] text-[8px] font-bold">
          W
        </span>
        <span className="mx-px h-2.5 flex-1 bg-[repeating-linear-gradient(to_bottom,#2b5797_0_1px,#fff_1px_3px)]" />
      </span>
    </TaskButton>
    <TaskButton label="Paint" running active>
      <PaletteIcon />
    </TaskButton>

    <div className="ml-auto flex h-full items-center text-[12px]">
      <button aria-label="Скрытые значки" className="mr-2.5">
        <svg width="12" height="8" viewBox="0 0 12 8" fill="none" stroke="#fff" strokeWidth="1.300">
          <path d="M.5 7L6 1.500L11.500 7" />
        </svg>
      </button>
      <button aria-label="Сеть" className="mr-2.5">
        <svg width="16" height="14" viewBox="0 0 16 14" fill="none" stroke="#fff">
          <path d="M5 1.500h10.500v8H3.500V6M9.500 9.500v3M6 12.500h7M.5.500h4v4h-4zM2.500 4.500v8H5" />
        </svg>
      </button>
      <button className="mr-3">РУС</button>
      <time className="mr-4">12:16</time>
      <button aria-label="Уведомления" className="mr-[19px]">
        <svg width="17" height="16" viewBox="0 0 17 16">
          <path d="M0 0h17v12.500h-5.500L8.500 16l-3-3.500H0z" fill="#fff" />
          <path d="M3 3.500h11M3 6.500h11M3 9.500h7" stroke="#101010" />
        </svg>
      </button>
      <div className="mr-1 h-full w-px bg-[#5a5a5a]" />
    </div>
  </nav>
);

export default function App() {
  return (
    <div className="flex h-screen flex-col overflow-hidden bg-white font-['Open_Sans','Noto_Sans',sans-serif] text-[11px] text-[#3b3b3b]">
      <TitleBar />
      <Tabs />
      <Ribbon />
      <Workspace />
      <StatusBar />
      <Taskbar />
    </div>
  );
}
